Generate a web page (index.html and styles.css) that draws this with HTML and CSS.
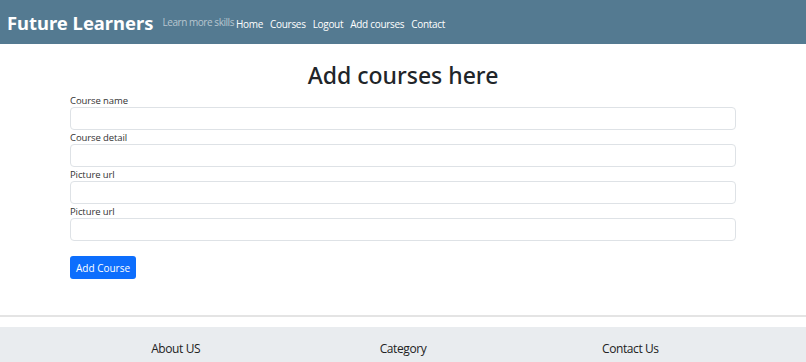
FILE: index.html
```html
<!DOCTYPE html>
<html lang="en">
<head>
    <meta charset="UTF-8">
    <title>Future Learners</title>
    <link rel="stylesheet" href="styles.css">
</head>
<body>
    <nav class="navbar">
        <a class="brand" href="#">Future Learners</a>
        <span class="tagline">Learn more skills</span>
        <ul class="nav-links">
            <li><a href="#">Home</a></li>
            <li><a href="#">Courses</a></li>
            <li><a href="#">Logout</a></li>
            <li><a href="#">Add courses</a></li>
            <li><a href="#">Contact</a></li>
        </ul>
    </nav>
    <main class="container">
        <h1>Add courses here</h1>
        <form class="course-form">
            <label for="name">Course name</label>
            <input type="text" id="name">
            <label for="detail">Course detail</label>
            <input type="text" id="detail">
            <label for="pic1">Picture url</label>
            <input type="text" id="pic1">
            <label for="pic2">Picture url</label>
            <input type="text" id="pic2">
            <button type="submit">Add Course</button>
        </form>
    </main>
    <hr class="divider">
    <footer>
        <div class="footer-cols">
            <h3>About US</h3>
            <h3>Category</h3>
            <h3>Contact Us</h3>
        </div>
    </footer>
</body>
</html>
```

FILE: styles.css
```css
body {
    margin: 0;
    font-family: 'Open Sans', 'Noto Sans', Arial, sans-serif;
    color: #212529;
    background: #fff;
}
.navbar {
    height: 44px;
    background: #547a91;
    display: flex;
    align-items: center;
    padding: 0 7px;
    box-sizing: border-box;
}
.brand {
    font-family: 'Noto Sans', 'Open Sans', sans-serif;
    font-size: 18.4px;
    font-weight: 700;
    color: #fff;
    text-decoration: none;
    margin-right: 9px;
}
.tagline {
    font-size: 10px;
    color: #b7c6d0;
    margin-right: 2px;
    letter-spacing: -0.45px;
}
.nav-links {
    display: flex;
    list-style: none;
    margin: 0;
    padding: 0;
    gap: 7px;
}
.nav-links a {
    color: #fff;
    text-decoration: none;
    font-size: 10px;
    letter-spacing: -0.3px;
}
.container {
    width: 666px;
    margin: 0 auto;
}
h1 {
    text-align: center;
    font-family: 'Noto Sans', sans-serif;
    font-size: 23px;
    font-weight: 500;
    margin: 16px 0 4px 0;
    line-height: 30px;
}
.course-form {
    display: flex;
    flex-direction: column;
    align-items: flex-start;
}
.course-form label {
    font-size: 9.5px;
    line-height: 13px;
    color: #333;
    letter-spacing: -0.1px;
}
.course-form input {
    width: 100%;
    height: 23px;
    box-sizing: border-box;
    border: 1px solid #dee2e6;
    border-radius: 4px;
    margin-bottom: 1px;
}
.course-form button {
    margin-top: 14px;
    background: #0d6efd;
    color: #fff;
    border: none;
    border-radius: 3px;
    font-family: inherit;
    font-size: 10px;
    padding: 0 6px;
    height: 23px;
    white-space: nowrap;
}
.divider {
    margin: 36px 0 10px 0;
    border: none;
    border-top: 2px solid #e4e4e4;
}
footer {
    background: #e9ecef;
    height: 40px;
}
.footer-cols {
    width: 682px;
    margin: 0 auto;
    display: grid;
    grid-template-columns: repeat(3, 1fr);
    text-align: center;
}
.footer-cols h3 {
    font-family: 'Open Sans', sans-serif;
    font-weight: 500;
    font-size: 12px;
    letter-spacing: -0.4px;
    margin: 13px 0 0 0;
    color: #222;
}
```
